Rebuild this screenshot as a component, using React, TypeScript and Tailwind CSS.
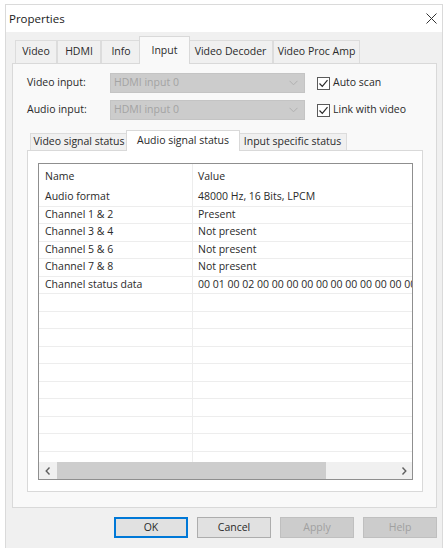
import React from "react";

// Win10-style "Properties" property sheet, Input page with the audio status list

const FONT = "font-['Open_Sans','Noto_Sans',sans-serif]";

const outerTabs = [
  { label: "Video", w: 42 },
  { label: "HDMI", w: 44 },
  { label: "Info", w: 40 },
  { label: "Input", w: 47, active: true },
  { label: "Video Decoder", w: 85 },
  { label: "Video Proc Amp", w: 87 },
];

const innerTabs = [
  { label: "Video signal status", w: 98 },
  { label: "Audio signal status", w: 110, active: true },
  { label: "Input specific status", w: 109 },
];

const rows: [string, string][] = [
  ["Audio format", "48000 Hz, 16 Bits, LPCM"],
  ["Channel 1 & 2", "Present"],
  ["Channel 3 & 4", "Not present"],
  ["Channel 5 & 6", "Not present"],
  ["Channel 7 & 8", "Not present"],
  ["Channel status data", "00 01 00 02 00 00 00 00 00 00 00 00 00 00 00 00 00 00 00 00"],
];

const EMPTY_ROWS = 10;

function Check({ label }: { label: string }) {
  return (
    <div className="flex items-center gap-[3px]">
      <div className="w-[13px] h-[13px] border border-[#5a5a5a] bg-white flex items-center justify-center">
        <svg width="11" height="11" viewBox="0 0 11 11">
          <path d="M1.5 5.5 L4.3 8.3 L9.5 2.2" fill="none" stroke="#2a2a2a" strokeWidth="1.2" />
        </svg>
      </div>
      <span>{label}</span>
    </div>
  );
}

function Combo({ value }: { value: string }) {
  return (
    <div className="w-[195px] h-[20px] bg-[#cccccc] border border-[#c4c4c4] flex items-center justify-between pl-[3px] pr-[6px] text-[#a3a3a3]">
      <span>{value}</span>
      <svg width="9" height="6" viewBox="0 0 9 6">
        <path d="M0.5 0.8 L4.5 4.8 L8.5 0.8" fill="none" stroke="#b0b0b0" strokeWidth="1" />
      </svg>
    </div>
  );
}

function Button({ label, primary, disabled }: { label: string; primary?: boolean; disabled?: boolean }) {
  const cls = primary
    ? "border-2 border-[#0078d7] bg-[#e1e1e1] text-[#2a2a2a]"
    : disabled
      ? "border border-[#bfbfbf] bg-[#cccccc] text-[#a0a0a0]"
      : "border border-[#adadad] bg-[#e1e1e1] text-[#2a2a2a]";
  return (
    <div className={`w-[74px] h-[21px] flex items-center justify-center ${cls}`}>{label}</div>
  );
}

function StatusList() {
  return (
    <div className="w-[375px] h-[317px] border border-[#8f8f8f] bg-white flex flex-col overflow-hidden">
      <div className="h-[25px] flex items-center shrink-0">
        <div className="w-[154px] pl-[6px] border-r border-[#ededed] h-full flex items-center">Name</div>
        <div className="pl-[5px]">Value</div>
      </div>
      <div className="h-[273px] overflow-hidden">
        {rows.map(([name, value]) => (
          <div key={name} className="h-[17.5px] flex border-b border-[#ededed]">
            <div className="w-[154px] shrink-0 pl-[6px] border-r border-[#ededed] flex items-center whitespace-nowrap">{name}</div>
            <div className="pl-[5px] flex items-center whitespace-nowrap">{value}</div>
          </div>
        ))}
        {Array.from({ length: EMPTY_ROWS }).map((_, i) => (
          <div key={i} className="h-[17.5px] flex border-b border-[#ededed]">
            <div className="w-[154px] shrink-0 border-r border-[#ededed]" />
          </div>
        ))}
      </div>
      {/* horizontal scrollbar */}
      <div className="h-[17px] shrink-0 bg-[#f0f0f0] flex items-center">
        <div className="w-[17px] h-full flex items-center justify-center">
          <svg width="6" height="8" viewBox="0 0 6 8">
            <path d="M4.5 0.5 L1.2 4 L4.5 7.5" fill="none" stroke="#606060" strokeWidth="1.4" />
          </svg>
        </div>
        <div className="flex-1 h-full pl-[1px]">
          <div className="w-[269px] h-full bg-[#cdcdcd]" />
        </div>
        <div className="w-[17px] h-full flex items-center justify-center">
          <svg width="6" height="8" viewBox="0 0 6 8">
            <path d="M1.5 0.5 L4.8 4 L1.5 7.5" fill="none" stroke="#606060" strokeWidth="1.4" />
          </svg>
        </div>
      </div>
    </div>
  );
}

export default function App() {
  return (
    <div className={`w-[446px] h-[548px] bg-white pl-[5px] pt-[4px] text-[10.5px] text-[#2a2a2a] ${FONT}`}>
      <div className="w-[438px] h-[544px] border border-[#dadada] border-b-0 bg-[#f0f0f0] flex flex-col">
        {/* title bar */}
        <div className="h-[27px] bg-white flex items-center justify-between pl-[3px] pr-[5px] shrink-0">
          <span className="text-[11.5px] text-[#1a1a1a]">Properties</span>
          <svg width="11" height="11" viewBox="0 0 11 11">
            <path d="M0.5 0.5 L10.5 10.5 M10.5 0.5 L0.5 10.5" stroke="#333" strokeWidth="1" />
          </svg>
        </div>

        {/* property sheet tabs */}
        <div className="h-[31px] flex items-end pl-[9px] shrink-0">
          {outerTabs.map((t) =>
            t.active ? (
              <div
                key={t.label}
                className="relative z-10 -mb-px -mx-[2px] h-[28px] bg-[#f9f9f9] border border-b-0 border-[#d9d9d9] flex items-start justify-center pt-[6px]"
                style={{ width: t.w + 4 }}
              >
                {t.label}
              </div>
            ) : (
              <div
                key={t.label}
                className="h-[23px] bg-[#f0f0f0] border border-b-0 border-[#dcdcdc] flex items-center justify-center"
                style={{ width: t.w }}
              >
                {t.label}
              </div>
            )
          )}
        </div>

        {/* Input page */}
        <div className="ml-[6px] w-[425px] h-[445px] border border-[#d9d9d9] bg-[#f9f9f9] pt-[9px] shrink-0">
          <div className="flex items-center h-[20px] pl-[14px]">
            <span className="w-[83px]">Video input:</span>
            <Combo value="HDMI input 0" />
            <div className="ml-[12px]">
              <Check label="Auto scan" />
            </div>
          </div>
          <div className="flex items-center h-[20px] pl-[14px] mt-[7px]">
            <span className="w-[83px]">Audio input:</span>
            <Combo value="HDMI input 0" />
            <div className="ml-[12px]">
              <Check label="Link with video" />
            </div>
          </div>

          {/* status sub-tabs */}
          <div className="mt-[10px] h-[20px] flex items-end pl-[17px]">
            {innerTabs.map((t) =>
              t.active ? (
                <div
                  key={t.label}
                  className="relative z-10 -mb-px -mx-[2px] h-[21px] bg-white border border-b-0 border-[#d9d9d9] flex items-start justify-center pt-[2px]"
                  style={{ width: t.w + 4 }}
                >
                  {t.label}
                </div>
              ) : (
                <div
                  key={t.label}
                  className="h-[17px] bg-[#f0f0f0] border border-b-0 border-[#dcdcdc] flex items-center justify-center"
                  style={{ width: t.w }}
                >
                  {t.label}
                </div>
              )
            )}
          </div>
          <div className="ml-[14px] w-[396px] h-[342px] bg-white border border-[#d9d9d9] pl-[10px] pt-[12px]">
            <StatusList />
          </div>
        </div>

        {/* dialog buttons */}
        <div className="flex justify-end gap-[9px] pr-[5px] mt-[9px]">
          <Button label="OK" primary />
          <Button label="Cancel" />
          <Button label="Apply" disabled />
          <Button label="Help" disabled />
        </div>
      </div>
    </div>
  );
}
